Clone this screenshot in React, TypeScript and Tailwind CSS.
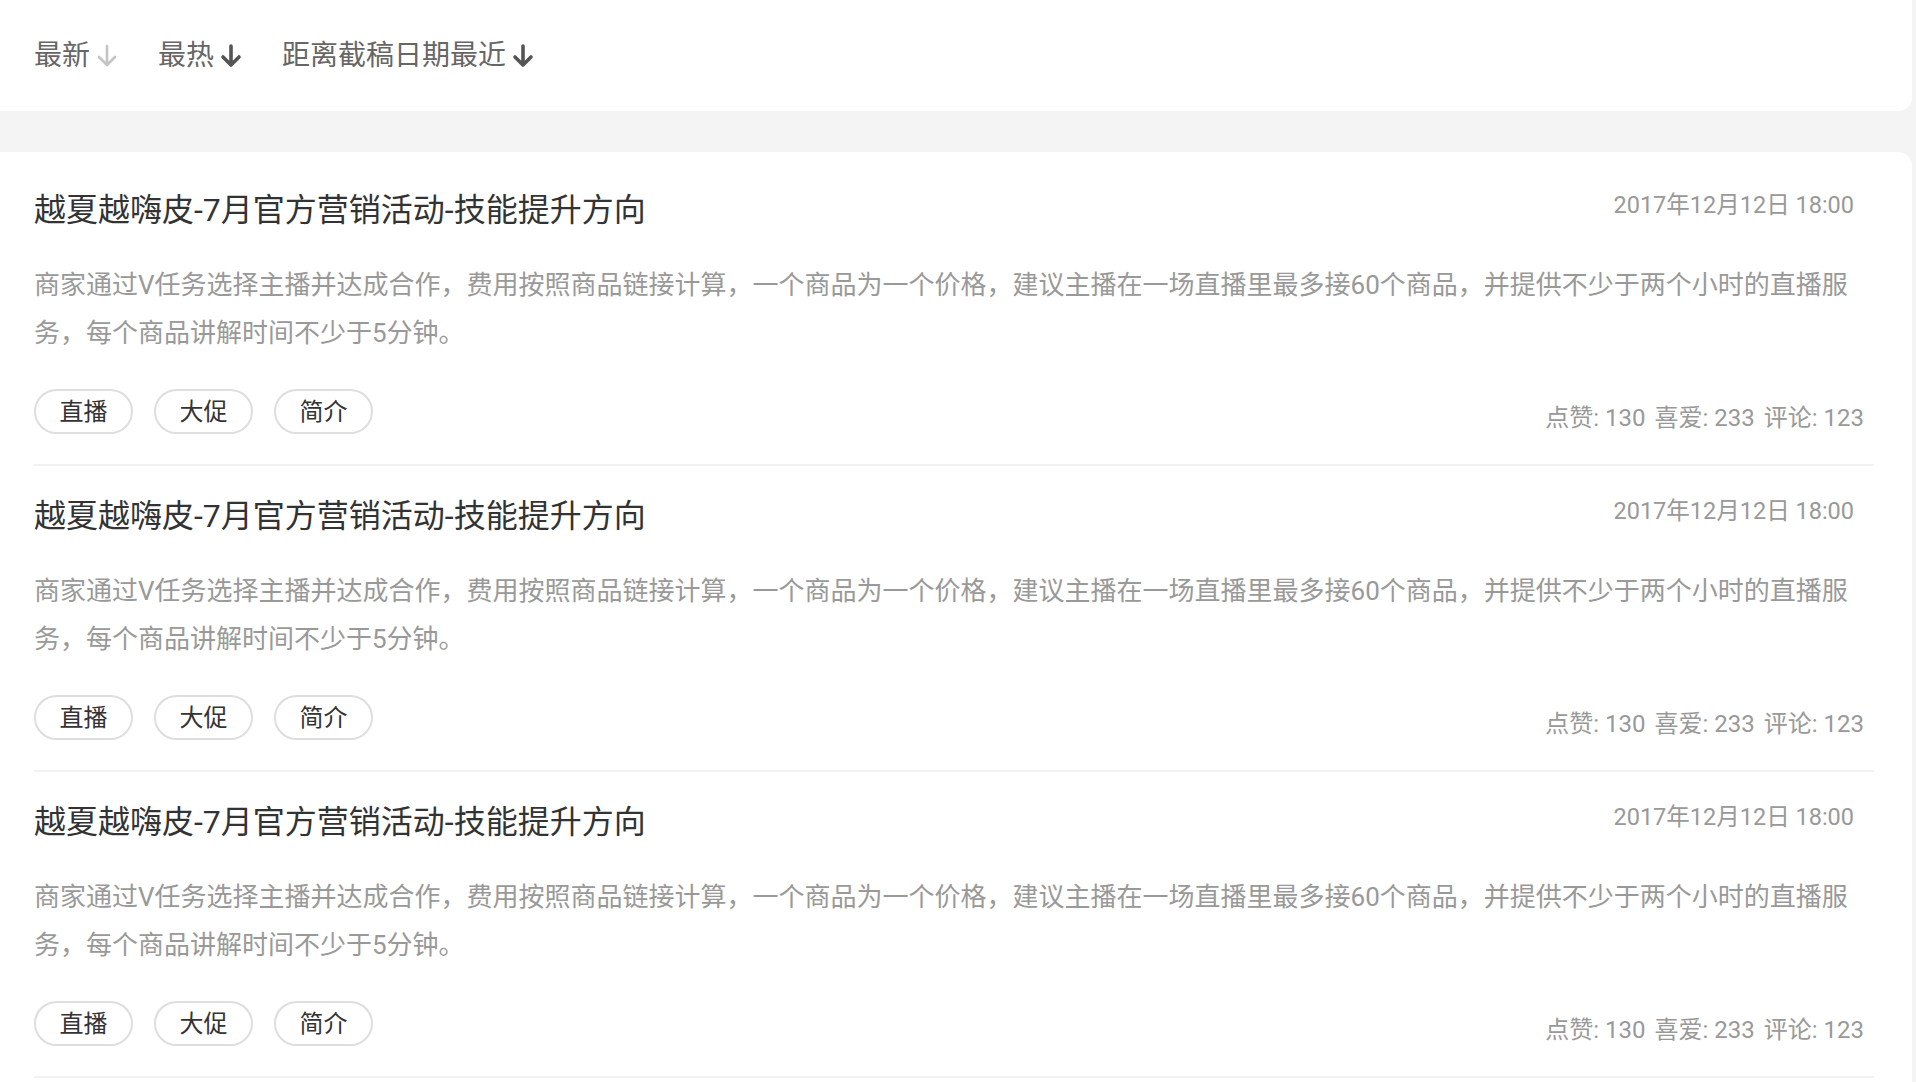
const font = { fontFamily: 'Roboto, "Noto Sans CJK SC", sans-serif' };

const items = [1, 2, 3];
const tags = ["直播", "大促", "简介"];

function DownArrow({ light }: { light?: boolean }) {
  return (
    <svg width="22" height="24" viewBox="0 0 22 24" fill="none" className={light ? "text-[#c4c4c4]" : "text-[#555]"}>
      <path
        d="M11 2v19M3 13l8 8 8-8"
        stroke="currentColor"
        strokeWidth={light ? 2.6 : 3.6}
        strokeLinecap="round"
        strokeLinejoin="round"
      />
    </svg>
  );
}

function SortBar() {
  return (
    <div className="h-[111px] bg-white rounded-br-[14px] flex items-center gap-[40px] pl-[34px] text-[28px] text-[#666]">
      <div className="flex items-center gap-[6px]">
        <span>最新</span>
        <DownArrow light />
      </div>
      <div className="flex items-center gap-[6px]">
        <span>最热</span>
        <DownArrow />
      </div>
      <div className="flex items-center gap-[6px]">
        <span>距离截稿日期最近</span>
        <DownArrow />
      </div>
    </div>
  );
}

function Item() {
  return (
    <div className="pt-[30px] pb-[30px] border-b-2 border-[#f2f2f2]">
      <div className="flex justify-between items-start">
        <h2 className="text-[32px] leading-[40px] text-[#333]">越夏越嗨皮-7月官方营销活动-技能提升方向</h2>
        <span className="text-[23.5px] leading-[32px] text-[#999] mr-[20px] mt-[-1px]">2017年12月12日 18:00</span>
      </div>
      <p className="mt-[31px] mr-[20px] text-[26px] leading-[48px] text-[#999]">
        商家通过V任务选择主播并达成合作，费用按照商品链接计算，一个商品为一个价格，建议主播在一场直播里最多接60个商品，并提供不少于两个小时的直播服务，每个商品讲解时间不少于5分钟。
      </p>
      <div className="mt-[32px] flex justify-between items-end">
        <div className="flex gap-[21px]">
          {tags.map((t) => (
            <span
              key={t}
              className="h-[45px] w-[99px] rounded-full border-2 border-[#dedede] flex items-center justify-center text-[24px] text-[#333]"
            >
              {t}
            </span>
          ))}
        </div>
        <div className="flex gap-[9px] text-[24px] leading-[32px] text-[#999] mr-[10px]">
          <span>点赞: 130</span>
          <span>喜爱: 233</span>
          <span>评论: 123</span>
        </div>
      </div>
    </div>
  );
}

export default function App() {
  return (
    <div className="h-[1082px] overflow-hidden bg-[#f4f4f4] pr-[4px]" style={font}>
      <SortBar />
      <div className="mt-[41px] h-[940px] bg-white rounded-tr-[14px] pt-[8px] pl-[34px] pr-[38px]">
        {items.map((i) => (
          <Item key={i} />
        ))}
      </div>
    </div>
  );
}
